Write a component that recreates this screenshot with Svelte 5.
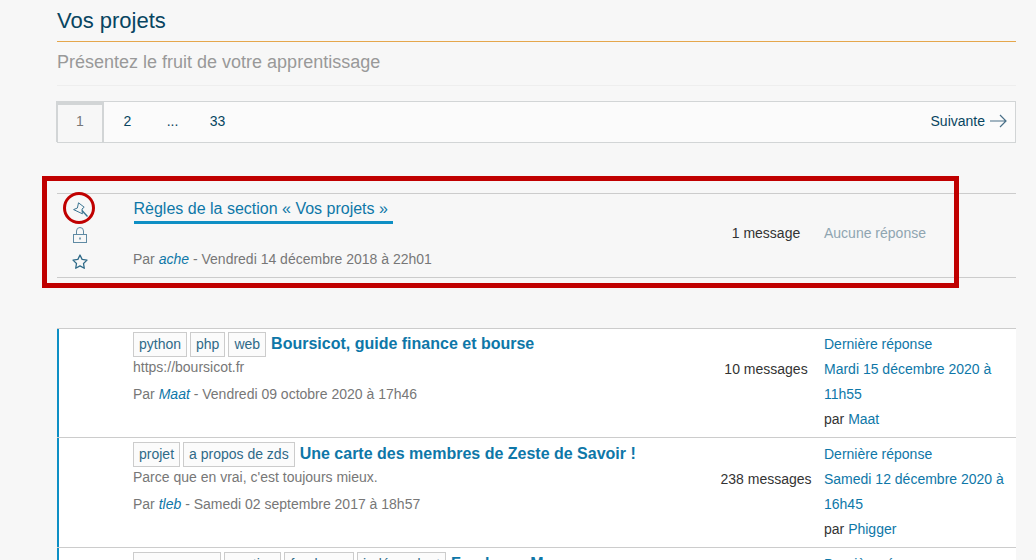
<script lang="ts">
	const topics = [
		{
			tags: ['python', 'php', 'web'],
			title: 'Boursicot, guide finance et bourse',
			sub: 'https://boursicot.fr',
			author: 'Maat',
			date: 'Vendredi 09 octobre 2020 à 17h46',
			count: '10 messages',
			last: 'Mardi 15 décembre 2020 à 11h55',
			by: 'Maat'
		},
		{
			tags: ['projet', 'a propos de zds'],
			title: 'Une carte des membres de Zeste de Savoir !',
			sub: "Parce que en vrai, c'est toujours mieux.",
			author: 'tleb',
			date: 'Samedi 02 septembre 2017 à 18h57',
			count: '238 messages',
			last: 'Samedi 12 décembre 2020 à 16h45',
			by: 'Phigger'
		},
		{
			tags: ['programmer', 'gestion', 'freelance', 'indépendant'],
			title: 'Freelance Manager',
			sub: '',
			author: 'Maat',
			date: 'Lundi 01 janvier 2018 à 10h00',
			count: '12 messages',
			last: 'Mardi 01 décembre 2020 à 09h12',
			by: 'Maat'
		}
	];
</script>

<main class="page">
	<header class="head">
		<h1>Vos projets</h1>
		<p class="subtitle">Présentez le fruit de votre apprentissage</p>
	</header>

	<nav class="pager">
		<span class="page-item current">1</span>
		<a class="page-item" href="#p2">2</a>
		<span class="page-item dots">...</span>
		<a class="page-item" href="#p33">33</a>
		<a class="next" href="#p2">
			Suivante
			<svg width="17" height="14" viewBox="0 0 17 14" fill="none" stroke="#4a7088" stroke-width="1.2">
				<path d="M0 7h16M10 1l6 6-6 6" />
			</svg>
		</a>
	</nav>

	<section class="rules">
		<div class="icons">
			<svg width="15" height="15" viewBox="0 0 15 15" fill="none" stroke="#3a7491" stroke-width="1" stroke-linejoin="round">
				<path d="M5.500 .8L11.200 5.200 9 7 9.400 11.800 .6 7.600 4.400 6z" />
				<path d="M9 8.600L14.500 14.500" stroke-width="1.400" />
			</svg>
			<svg width="14" height="16" viewBox="0 0 14 16" fill="none" stroke="#5f8aa3" stroke-width="1">
				<rect x=".5" y="7.500" width="13" height="8" />
				<path d="M3.500 7.500V4a3.500 3.500 0 0 1 7 0v3.500" />
				<rect x="6.200" y="10.500" width="1.600" height="2" fill="#5f8aa3" stroke="none" />
			</svg>
			<svg width="16" height="15" viewBox="0 0 16 15" fill="none" stroke="#2f6a88" stroke-width="1.3" stroke-linejoin="round">
				<path d="M8 1l2.100 4.400 4.900.7-3.500 3.400.8 4.800L8 11.900l-4.300 2.400.8-4.800L1 6.100l4.900-.7z" />
			</svg>
		</div>
		<div class="rules-main">
			<a class="rules-title" href="#rules">Règles de la section « Vos projets »</a>
			<p class="meta">Par <a href="#ache"><em>ache</em></a> - Vendredi 14 décembre 2018 à 22h01</p>
		</div>
		<div class="count">1 message</div>
		<div class="no-reply">Aucune réponse</div>
		<span class="highlight"></span>
		<span class="ring"></span>
	</section>

	<ul class="topics">
		{#each topics as t}
			<li class="topic">
				<div class="topic-row">
					<div class="topic-main">
						<div class="title-line">
							{#each t.tags as tag}
								<span class="tag">{tag}</span>
							{/each}
							<a class="topic-title" href="#t">{t.title}</a>
						</div>
						<p class="sub">{t.sub}</p>
						<p class="meta">Par <a href="#a"><em>{t.author}</em></a> - {t.date}</p>
					</div>
					<div class="count">{t.count}</div>
					<div class="last">
						<a href="#l">Dernière réponse</a>
						<a href="#l">{t.last}</a>
						<span>par <a href="#u">{t.by}</a></span>
					</div>
				</div>
			</li>
		{/each}
	</ul>
</main>

<style>
	:global(body) {
		background: #f7f7f7;
		overflow: hidden;
	}
	.page {
		position: relative;
		height: 560px;
		overflow: hidden;
		padding: 0 20px 0 57px;
		font-family: 'Liberation Sans', Arial, sans-serif;
		font-size: 14px;
		color: #333;
	}
	a {
		color: #0e77a8;
		text-decoration: none;
	}
	h1 {
		margin: 0;
		padding-top: 7px;
		height: 34px;
		font-size: 22px;
		font-weight: 400;
		line-height: 28px;
		color: #084561;
		border-bottom: 1px solid #e5a74c;
	}
	.subtitle {
		margin: 0;
		height: 43px;
		line-height: 40px;
		font-size: 18px;
		color: #999;
		border-bottom: 1px solid #eee;
	}
	.pager {
		display: flex;
		align-items: stretch;
		margin-top: 15px;
		height: 40px;
		background: #fbfbfb;
		border: 1px solid #d2d5d6;
		border-left: 0;
	}
	.page-item {
		width: 45px;
		box-sizing: border-box;
		padding-bottom: 3px;
		display: flex;
		align-items: center;
		justify-content: center;
		color: #084561;
	}
	.current {
		width: 48px;
		margin: -1px 1px 0 -1px;
		padding-bottom: 6px;
		color: #777;
		background: #f7f7f7;
		border: solid #d2d5d6;
		border-width: 4px 2px 0;
	}
	.next {
		margin-left: auto;
		padding: 0 8px 3px 0;
		display: flex;
		align-items: center;
		gap: 5px;
		color: #084561;
	}
	.rules {
		display: flex;
		margin-top: 50px;
		height: 83px;
		border: solid #ccc;
		border-width: 1px 0;
		position: relative;
	}
	.icons {
		width: 46px;
		flex: none;
		display: grid;
		grid-auto-rows: 26px;
		place-items: center;
		align-content: start;
		padding-top: 2px;
	}
	.rules-main {
		flex: 1;
		margin-left: 30px;
	}
	.rules-title {
		display: inline-block;
		font-size: 16px;
		line-height: 19px;
		margin: 5px 0 0 .5px;
		padding: 0 5.5px 3px 0;
		border-bottom: 3px solid #0e8fc4;
	}
	.rules .meta {
		margin-top: 25px;
	}
	.meta {
		margin: 0;
		line-height: 20px;
		color: #777;
	}
	.count {
		width: 104px;
		flex: none;
		text-align: center;
		line-height: 25px;
	}
	.rules .count {
		align-self: center;
		padding-bottom: 4px;
	}
	.no-reply {
		width: 192px;
		margin-left: 6px;
		flex: none;
		align-self: center;
		padding-bottom: 6px;
		color: #8fa5b1;
		line-height: 20px;
	}
	.highlight {
		position: absolute;
		left: -15px;
		top: -18px;
		width: 917px;
		height: 112px;
		box-sizing: border-box;
		border: 5px solid #c00000;
	}
	.ring {
		position: absolute;
		left: 6px;
		top: -2px;
		width: 32px;
		height: 32px;
		box-sizing: border-box;
		border: 3px solid #c00000;
		border-radius: 50%;
	}
	.topics {
		list-style: none;
		margin: 50px 0 0;
		padding: 0;
		border-top: 1px solid #ccc;
	}
	.topic {
		height: 110px;
		box-sizing: border-box;
		background: #fff;
		border-bottom: 1px solid #ccc;
	}
	.topic:first-child {
		height: 109px;
	}
	.topic:first-child .topic-row {
		padding-top: 0;
	}
	.topic-row {
		display: flex;
		box-sizing: border-box;
		height: 100%;
		padding-top: 1px;
		border-left: 2px solid #0e8fc4;
	}
	.topic-main {
		flex: 1;
		min-width: 0;
		margin-left: 74px;
		padding-top: 3px;
	}
	.title-line {
		display: flex;
		align-items: center;
		height: 25px;
		white-space: nowrap;
	}
	.tag {
		border: 1px solid #ccc;
		background: #fbfbfb;
		color: #2f6a88;
		padding: 0 5px;
		line-height: 23px;
		margin-right: 3px;
	}
	.topic-title {
		margin: 0 0 2px 2px;
		font-size: 16px;
		font-weight: 700;
	}
	.sub {
		margin: 0;
		height: 27px;
		line-height: 20px;
		color: #777;
	}
	.topic .count {
		padding-top: 28px;
	}
	.last {
		margin-left: 6px;
		width: 192px;
		flex: none;
		padding-top: 3px;
		display: flex;
		flex-direction: column;
		line-height: 25px;
	}
</style>
